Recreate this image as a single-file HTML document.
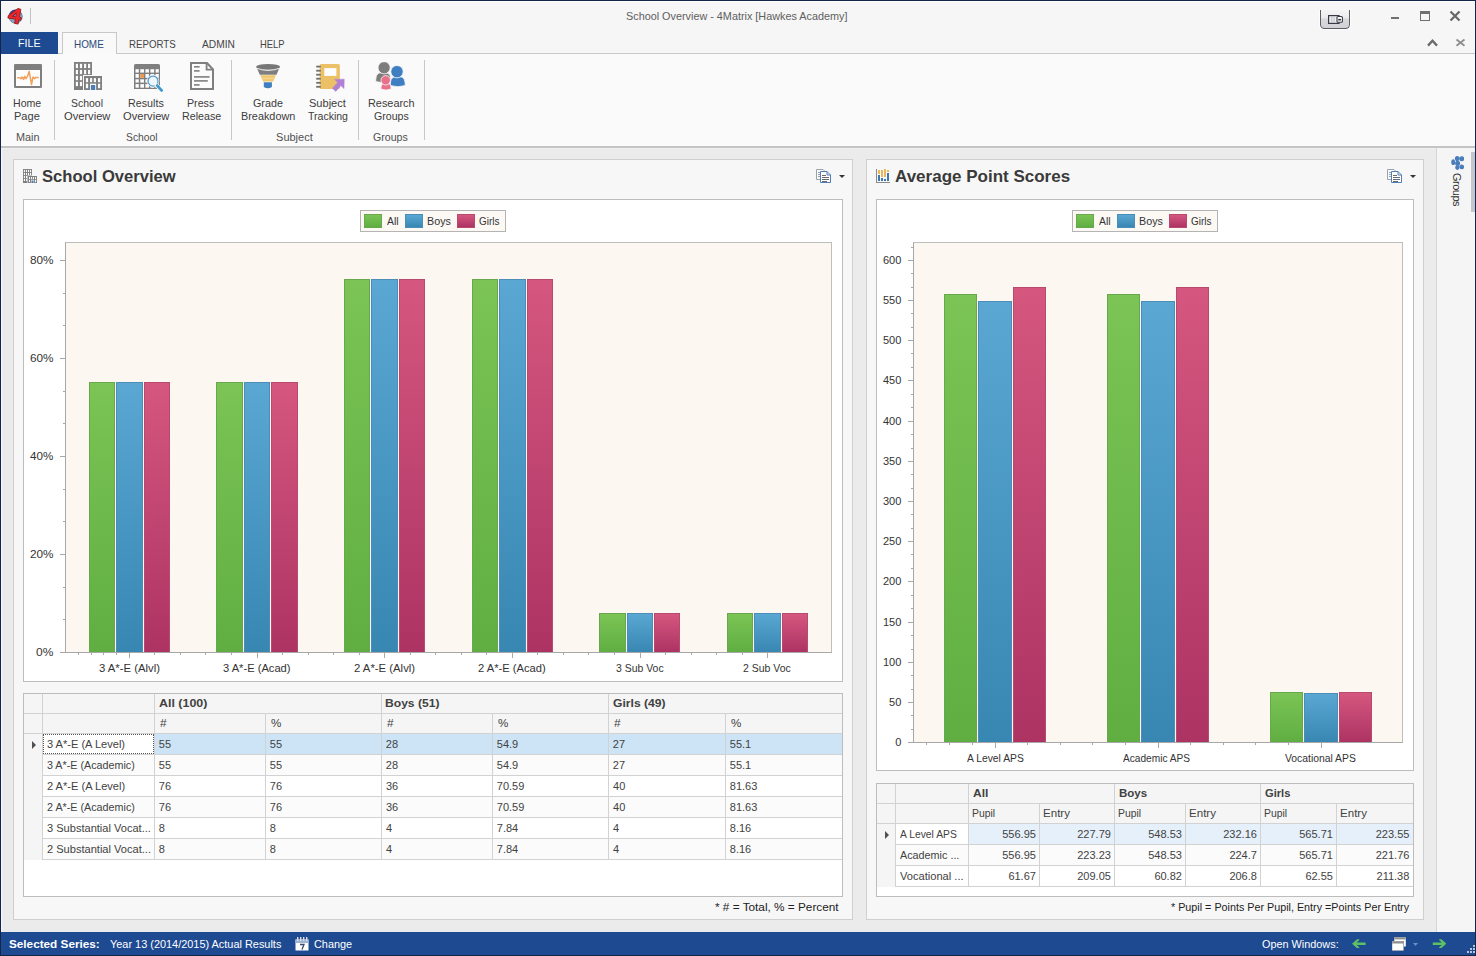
<!DOCTYPE html>
<html><head><meta charset="utf-8"><title>School Overview - 4Matrix [Hawkes Academy]</title>
<style>
html,body{margin:0;padding:0;}
body{width:1476px;height:956px;overflow:hidden;position:relative;background:#ebebeb;font-family:"Liberation Sans",sans-serif;font-size:11px;}
div,svg.a{position:absolute;display:block;}
span.t{position:absolute;white-space:pre;display:block;transform-origin:0 0;}
</style></head><body>
<div style="left:0px;top:0px;width:1476px;height:956px;background:#13264a;"></div>
<div style="left:1px;top:1px;width:1474px;height:146px;background:#f6f6f6;"></div>
<div style="left:1px;top:1px;width:1474px;height:1px;background:#ffffff;"></div>
<div style="left:1px;top:53px;width:1474px;height:1px;background:#c8c8c8;"></div>
<div style="left:1px;top:146px;width:1474px;height:2px;background:#c4c4c4;"></div>
<div style="left:1px;top:148px;width:1435px;height:784px;background:#ebebeb;"></div>
<div style="left:1436px;top:148px;width:1px;height:784px;background:#d6d6d6;"></div>
<div style="left:1437px;top:148px;width:38px;height:784px;background:#f5f5f5;"></div>
<div style="left:1px;top:148px;width:1435px;height:1px;background:#f0f0f0;"></div>
<div style="left:1px;top:148px;width:1px;height:784px;background:#f6f8fb;"></div>
<div style="left:1px;top:932px;width:1474px;height:23px;background:#1e4a91;"></div>
<svg class="a" style="left:6px;top:7px" width="18" height="18" viewBox="0 0 18 18">
<circle cx="9.6" cy="9.6" r="6.7" fill="#86a4c2" stroke="#4a5f80" stroke-width=".6"/><path d="M3 7.4 A6.9 6.9 0 0 1 13 3.6 L6 11z" fill="#33468c"/>
<g transform="translate(0.2,-0.6) scale(1.05,1.12)"><path d="M11.2 1.8 L14 2.6 L12.6 9.6 L14.6 10.2 L13.8 12.4 L12 12 L11.3 15.8 L8 15.2 L8.8 11.4 L1.6 10.4 L2 8.2 Z M9.6 5.8 L6 8.8 L9.2 9.3 Z" fill="#ee262c" stroke="#8a1216" stroke-width=".7" fill-rule="evenodd"/></g></svg>
<div style="left:30px;top:8px;width:1px;height:16px;background:#c2c2c2;"></div>
<span class="t" style="left:626.11px;top:10px;font-size:11px;line-height:12px;color:#606060;transform:scaleX(0.9842);">School Overview - 4Matrix [Hawkes Academy]</span>
<div class="a" style="left:1319px;top:10px;width:32px;height:20px;border-radius:0 0 5.5px 5.5px;background:#fdfdfd"></div>
<div class="a" style="left:1320px;top:10px;width:30px;height:19px;border:1px solid #5e5e62;border-top:none;border-radius:0 0 4.5px 4.5px;background:linear-gradient(#f5f5f5 0%,#ececec 42%,#d9d9dc 50%,#d2d2d6 100%);box-sizing:border-box"></div>
<svg class="a" style="left:1328px;top:15px" width="15" height="9" viewBox="0 0 15 9">
<rect x=".6" y=".6" width="10.4" height="7.8" fill="#ececee" stroke="#3a3a46" stroke-width="1.2"/><rect x="3.4" y="1.2" width=".8" height="6.6" fill="#b4b4bc"/><rect x="5.6" y="1.2" width=".8" height="6.6" fill="#b4b4bc"/>
<rect x="9" y="1.5" width="5.4" height="5.8" rx="1" fill="#fff" stroke="#3a3a46" stroke-width="1.1"/><rect x="10.2" y="3.9" width="2.8" height="1.6" fill="#3a3a46"/></svg>
<div style="left:1391px;top:17px;width:8px;height:2px;background:#707070;"></div>
<div class="a" style="left:1420px;top:11px;width:10px;height:10px;border:1px solid #707070;border-top-width:3px;box-sizing:border-box"></div>
<svg class="a" style="left:1449px;top:10px" width="12" height="12" viewBox="0 0 12 12"><path d="M1.5 1.5 L10.5 10.5 M10.5 1.5 L1.5 10.5" stroke="#686868" stroke-width="2.3" fill="none"/></svg>
<svg class="a" style="left:1427px;top:38px" width="11" height="9" viewBox="0 0 11 9"><path d="M1 7.6 L5.5 2.8 L10 7.6" stroke="#6a6a6a" stroke-width="2.3" fill="none"/></svg>
<svg class="a" style="left:1455px;top:38px" width="11" height="9" viewBox="0 0 11 9"><path d="M1.5 1.5 L9.5 7.8 M9.5 1.5 L1.5 7.8" stroke="#8e8e8e" stroke-width="1.8" fill="none"/></svg>
<div style="left:1px;top:32px;width:57px;height:22px;background:#1e4a91;"></div>
<span class="t" style="left:17.85px;top:37px;font-size:11px;line-height:12px;color:#ffffff;transform:scaleX(0.9690);">FILE</span>
<div class="a" style="left:62px;top:32px;width:55px;height:22px;border:1px solid #c8c8c8;border-bottom:none;background:#f9f9f9;box-sizing:border-box"></div>
<span class="t" style="left:74.01px;top:38px;font-size:11px;line-height:12px;color:#2b4a78;transform:scaleX(0.9012);">HOME</span>
<span class="t" style="left:128.83px;top:38px;font-size:11px;line-height:12px;color:#444;transform:scaleX(0.8812);">REPORTS</span>
<span class="t" style="left:202.00px;top:38px;font-size:11px;line-height:12px;color:#444;transform:scaleX(0.9269);">ADMIN</span>
<span class="t" style="left:260.06px;top:38px;font-size:11px;line-height:12px;color:#444;transform:scaleX(0.8509);">HELP</span>
<div style="left:1px;top:54px;width:1474px;height:92px;background:#fafafa;"></div>
<div style="left:63px;top:53px;width:53px;height:1px;background:#fafafa;"></div>
<span class="t" style="left:12.51px;top:97px;font-size:11px;line-height:12px;color:#3c3c3c;transform:scaleX(0.9606);">Home</span>
<span class="t" style="left:13.67px;top:110px;font-size:11px;line-height:12px;color:#3c3c3c;transform:scaleX(1.0046);">Page</span>
<span class="t" style="left:71.07px;top:97px;font-size:11px;line-height:12px;color:#3c3c3c;transform:scaleX(0.9505);">School</span>
<span class="t" style="left:63.54px;top:110px;font-size:11px;line-height:12px;color:#3c3c3c;transform:scaleX(1.0115);">Overview</span>
<span class="t" style="left:127.90px;top:97px;font-size:11px;line-height:12px;color:#3c3c3c;transform:scaleX(0.9750);">Results</span>
<span class="t" style="left:122.54px;top:110px;font-size:11px;line-height:12px;color:#3c3c3c;transform:scaleX(1.0115);">Overview</span>
<span class="t" style="left:187.45px;top:97px;font-size:11px;line-height:12px;color:#3c3c3c;transform:scaleX(0.9672);">Press</span>
<span class="t" style="left:181.50px;top:110px;font-size:11px;line-height:12px;color:#3c3c3c;transform:scaleX(0.9717);">Release</span>
<span class="t" style="left:253.01px;top:97px;font-size:11px;line-height:12px;color:#3c3c3c;transform:scaleX(0.9787);">Grade</span>
<span class="t" style="left:240.79px;top:110px;font-size:11px;line-height:12px;color:#3c3c3c;transform:scaleX(0.9871);">Breakdown</span>
<span class="t" style="left:309.05px;top:97px;font-size:11px;line-height:12px;color:#3c3c3c;transform:scaleX(1.0045);">Subject</span>
<span class="t" style="left:307.96px;top:110px;font-size:11px;line-height:12px;color:#3c3c3c;transform:scaleX(0.9568);">Tracking</span>
<span class="t" style="left:367.63px;top:97px;font-size:11px;line-height:12px;color:#3c3c3c;transform:scaleX(0.9890);">Research</span>
<span class="t" style="left:373.52px;top:110px;font-size:11px;line-height:12px;color:#3c3c3c;transform:scaleX(0.9644);">Groups</span>
<span class="t" style="left:15.69px;top:131px;font-size:11px;line-height:12px;color:#505050;transform:scaleX(0.9842);">Main</span>
<span class="t" style="left:126.33px;top:131px;font-size:11px;line-height:12px;color:#505050;transform:scaleX(0.9413);">School</span>
<span class="t" style="left:276.05px;top:131px;font-size:11px;line-height:12px;color:#505050;">Subject</span>
<span class="t" style="left:372.82px;top:131px;font-size:11px;line-height:12px;color:#505050;transform:scaleX(0.9644);">Groups</span>
<div style="left:54px;top:60px;width:1px;height:80px;background:#c8c8c8;"></div>
<div style="left:231px;top:60px;width:1px;height:80px;background:#c8c8c8;"></div>
<div style="left:358px;top:60px;width:1px;height:80px;background:#c8c8c8;"></div>
<div style="left:424px;top:60px;width:1px;height:80px;background:#c8c8c8;"></div>
<svg class="a" style="left:14px;top:64px" width="28" height="24" viewBox="0 0 28 24">
<rect x="0" y="0" width="28" height="24" rx="1.2" fill="#7f7f7f"/><rect x="2" y="6" width="24" height="16" fill="#fdfdfd"/>
<path d="M3.3 13.8 L6 13.8 L7 14.8 L8.2 13 L9.6 15.4 L10.8 12.4 L12 14.6 L13.4 12.6 L15.2 7.4 L17.5 20.5 L19 13 L20.4 14.6 L21.4 13.6 L24.6 13.6" fill="none" stroke="#f0a15c" stroke-width="1.5" stroke-linejoin="round"/></svg>
<svg class="a" style="left:74px;top:62px" width="28" height="28" viewBox="0 0 28 28"><rect x="0" y="0" width="18" height="28" fill="#7f7f7f"/><rect x="1.8" y="1.8" width="2.2" height="4.3" fill="#fbfbfb"/><rect x="5.9" y="1.8" width="2.2" height="4.3" fill="#fbfbfb"/><rect x="10" y="1.8" width="2.2" height="4.3" fill="#fbfbfb"/><rect x="14" y="1.8" width="2.2" height="4.3" fill="#fbfbfb"/><rect x="1.8" y="7.9" width="2.2" height="4.3" fill="#fbfbfb"/><rect x="5.9" y="7.9" width="2.2" height="4.3" fill="#fbfbfb"/><rect x="10" y="7.9" width="2.2" height="4.3" fill="#fbfbfb"/><rect x="14" y="7.9" width="2.2" height="4.3" fill="#fbfbfb"/><rect x="1.8" y="13.9" width="2.2" height="4.3" fill="#fbfbfb"/><rect x="5.9" y="13.9" width="2.2" height="4.3" fill="#fbfbfb"/><rect x="1.8" y="19.8" width="2.2" height="4.3" fill="#fbfbfb"/><rect x="5.9" y="19.8" width="2.2" height="4.3" fill="#fbfbfb"/><rect x="9" y="13" width="19" height="15" fill="#fbfbfb"/><rect x="10" y="14" width="18" height="14" fill="#7f7f7f"/><rect x="11.9" y="16.1" width="2.2" height="4.1" fill="#fbfbfb"/><rect x="16" y="16.1" width="2.2" height="4.1" fill="#fbfbfb"/><rect x="19.8" y="16.1" width="2.2" height="4.1" fill="#fbfbfb"/><rect x="24" y="16.1" width="2.2" height="4.1" fill="#fbfbfb"/><rect x="11.9" y="21.7" width="2.2" height="4.5" fill="#fbfbfb"/><rect x="24" y="21.7" width="2.2" height="4.5" fill="#fbfbfb"/><rect x="16" y="21.7" width="6.1" height="6.3" fill="#fbfbfb"/><rect x="16.9" y="23" width="4.3" height="5" fill="#4a7ebb"/></svg>
<svg class="a" style="left:134px;top:64px" width="30" height="29" viewBox="0 0 30 29"><path d="M0 25 L0 1.5 Q0 0 1.5 0 L24.5 0 Q26 0 26 1.5 L26 25 Z" fill="#7f7f7f"/><rect x="1.5" y="5.2" width="3.3" height="3.4" fill="#fdfdfd"/><rect x="1.5" y="10" width="3.3" height="3.8" fill="#fdfdfd"/><rect x="1.5" y="15.3" width="3.3" height="3.3" fill="#fdfdfd"/><rect x="1.5" y="20.1" width="3.3" height="3.6" fill="#fdfdfd"/><rect x="6.3" y="5.2" width="3.7" height="3.4" fill="#fdfdfd"/><rect x="6.3" y="10" width="3.7" height="3.8" fill="#fdfdfd"/><rect x="6.3" y="15.3" width="3.7" height="3.3" fill="#fdfdfd"/><rect x="6.3" y="20.1" width="3.7" height="3.6" fill="#fdfdfd"/><rect x="11.4" y="5.2" width="3.5" height="3.4" fill="#fdfdfd"/><rect x="11.4" y="10" width="3.5" height="3.8" fill="#fdfdfd"/><rect x="11.4" y="15.3" width="3.5" height="3.3" fill="#fdfdfd"/><rect x="11.4" y="20.1" width="3.5" height="3.6" fill="#fdfdfd"/><rect x="16.4" y="5.2" width="3.7" height="3.4" fill="#fdfdfd"/><rect x="16.4" y="10" width="3.7" height="3.8" fill="#fdfdfd"/><rect x="16.4" y="15.3" width="3.7" height="3.3" fill="#fdfdfd"/><rect x="16.4" y="20.1" width="3.7" height="3.6" fill="#fdfdfd"/><rect x="21.6" y="5.2" width="3.2" height="3.4" fill="#fdfdfd"/><rect x="21.6" y="10" width="3.2" height="3.8" fill="#fdfdfd"/><rect x="21.6" y="15.3" width="3.2" height="3.3" fill="#fdfdfd"/><rect x="21.6" y="20.1" width="3.2" height="3.6" fill="#fdfdfd"/><rect x="6.3" y="10" width="3.7" height="3.8" fill="#f0964a"/><circle cx="19" cy="17.1" r="6.3" fill="#fbfbfb"/><circle cx="19" cy="17.1" r="5" fill="#eef6fc" stroke="#4f9ad0" stroke-width="1.25"/><path d="M22.8 21.4 L27.6 26.4" stroke="#fbfbfb" stroke-width="4.2" stroke-linecap="round"/><path d="M23.2 21.6 L27.6 26.4" stroke="#3d96cc" stroke-width="2.8" stroke-linecap="round"/></svg>
<svg class="a" style="left:190px;top:62px" width="24" height="28" viewBox="0 0 24 28">
<path d="M1 1 L17 1 L23 7.5 L23 27 L1 27 Z" fill="#fbfbfb" stroke="#7f7f7f" stroke-width="2"/><path d="M16.6 1 L16.6 7.6 L23 7.6" fill="none" stroke="#7f7f7f" stroke-width="1.8"/>
<rect x="4" y="4" width="5.6" height="1.6" fill="#7f7f7f"/><rect x="4" y="8.1" width="5.6" height="1.6" fill="#7f7f7f"/><rect x="4" y="14.1" width="15.6" height="1.6" fill="#7f7f7f"/><rect x="4" y="18.1" width="13.8" height="1.6" fill="#7f7f7f"/><rect x="4" y="22.1" width="5.6" height="1.6" fill="#7f7f7f"/></svg>
<svg class="a" style="left:256px;top:64px" width="25" height="25" viewBox="0 0 25 25">
<path d="M0.6 3.4 Q12.1 9 23.6 3.4 L20.5 10.7 L3.8 10.7 Z" fill="#7f7f7f"/>
<ellipse cx="12.1" cy="2.9" rx="12.1" ry="2.9" fill="#777777"/>
<path d="M0.4 4.2 Q12.1 8.6 23.8 4.2" fill="none" stroke="#f4f4f4" stroke-width=".9"/>
<path d="M4.3 11.3 L19.9 11.3 L17 17.6 L7.2 17.6 Z" fill="#f0c468"/><path d="M5.4 13.6 L18.8 13.6 L18 15.3 L6.2 15.3Z" fill="#f6d48c"/>
<path d="M7.8 18.2 L15.9 18.2 L15.9 23 Q11.8 25.6 7.8 23 Z" fill="#3f7fc1"/></svg>
<svg class="a" style="left:315px;top:64px" width="30" height="29" viewBox="0 0 30 29"><rect x="4.7" y="0" width="20.2" height="25.1" rx="1.5" fill="#ecc067"/><rect x="9.3" y="4.1" width="12.1" height="7.8" fill="#fdfdfd"/><rect x="1.2" y="1.7" width="4.6" height="1.8" fill="#6f6f6f"/><rect x="1.2" y="5.8" width="4.6" height="1.8" fill="#6f6f6f"/><rect x="1.2" y="9.8" width="4.6" height="1.8" fill="#6f6f6f"/><rect x="1.2" y="13.8" width="4.6" height="1.8" fill="#6f6f6f"/><rect x="1.2" y="17.9" width="4.6" height="1.8" fill="#6f6f6f"/><rect x="1.2" y="21.9" width="4.6" height="1.8" fill="#6f6f6f"/><path d="M19.6 15.4 L29.2 15.2 L29 24.6 L25.8 21.6 L20.8 27.4 L17.4 24.2 L22.8 18.6 Z" fill="#b07fd6" stroke="#b07fd6" stroke-width=".5"/></svg>
<svg class="a" style="left:375px;top:62px" width="31" height="30" viewBox="0 0 31 30"><path d="M0.7 19.6 C0.7 12.1 2.9 10.6 8.3 10.6 C13.7 10.6 15.9 12.1 15.9 19.6 Q8.3 21.8 0.7 19.6Z" fill="#7d7d7d" stroke="#fafafa" stroke-width=".8"/><circle cx="9.1" cy="5.75" r="6.1" fill="#7d7d7d" stroke="#fafafa" stroke-width=".8"/><path d="M15.3 23.6 C15.3 16.1 17.5 14.6 22.8 14.6 C28.0 14.6 30.2 16.1 30.2 23.6 Q22.8 25.8 15.3 23.6Z" fill="#3f7fc1" stroke="#fafafa" stroke-width=".8"/><circle cx="22" cy="9.7" r="6.2" fill="#3f7fc1" stroke="#fafafa" stroke-width=".8"/><path d="M5.9 27 C5.9 22.1 8.1 20.6 11.0 20.6 C13.9 20.6 16.1 22.1 16.1 27 Q11.0 29.2 5.9 27Z" fill="#e8708a" stroke="#fafafa" stroke-width=".8"/><circle cx="10.7" cy="18.3" r="4.7" fill="#e8708a" stroke="#fafafa" stroke-width=".8"/></svg>
<div class="a" style="left:13px;top:159px;width:840px;height:761px;background:#f7f7f7;border:1px solid #cfcfcf;box-sizing:border-box"></div>
<div class="a" style="left:866px;top:159px;width:558px;height:761px;background:#f7f7f7;border:1px solid #cfcfcf;box-sizing:border-box"></div>
<svg class="a" style="left:23px;top:169px" width="14" height="14" viewBox="0 0 28 28"><rect x="0" y="0" width="18" height="28" fill="#7f7f7f"/><rect x="1.8" y="1.8" width="2.2" height="4.3" fill="#fbfbfb"/><rect x="5.9" y="1.8" width="2.2" height="4.3" fill="#fbfbfb"/><rect x="10" y="1.8" width="2.2" height="4.3" fill="#fbfbfb"/><rect x="14" y="1.8" width="2.2" height="4.3" fill="#fbfbfb"/><rect x="1.8" y="7.9" width="2.2" height="4.3" fill="#fbfbfb"/><rect x="5.9" y="7.9" width="2.2" height="4.3" fill="#fbfbfb"/><rect x="10" y="7.9" width="2.2" height="4.3" fill="#fbfbfb"/><rect x="14" y="7.9" width="2.2" height="4.3" fill="#fbfbfb"/><rect x="1.8" y="13.9" width="2.2" height="4.3" fill="#fbfbfb"/><rect x="5.9" y="13.9" width="2.2" height="4.3" fill="#fbfbfb"/><rect x="1.8" y="19.8" width="2.2" height="4.3" fill="#fbfbfb"/><rect x="5.9" y="19.8" width="2.2" height="4.3" fill="#fbfbfb"/><rect x="9" y="13" width="19" height="15" fill="#fbfbfb"/><rect x="10" y="14" width="18" height="14" fill="#7f7f7f"/><rect x="11.9" y="16.1" width="2.2" height="4.1" fill="#fbfbfb"/><rect x="16" y="16.1" width="2.2" height="4.1" fill="#fbfbfb"/><rect x="19.8" y="16.1" width="2.2" height="4.1" fill="#fbfbfb"/><rect x="24" y="16.1" width="2.2" height="4.1" fill="#fbfbfb"/><rect x="11.9" y="21.7" width="2.2" height="4.5" fill="#fbfbfb"/><rect x="24" y="21.7" width="2.2" height="4.5" fill="#fbfbfb"/><rect x="16" y="21.7" width="6.1" height="6.3" fill="#fbfbfb"/><rect x="16.9" y="23" width="4.3" height="5" fill="#4a7ebb"/></svg>
<span class="t" style="left:41.61px;top:167px;font-size:17px;line-height:19px;color:#3a3a3a;font-weight:bold;transform:scaleX(0.9758);">School Overview</span>
<svg class="a" style="left:876px;top:169px" width="14" height="14" viewBox="0 0 14 14">
<rect x="0" y="0" width="1" height="14" fill="#8a8a8a"/><rect x="0" y="13" width="14" height="1" fill="#8a8a8a"/>
<rect x="2" y="1" width="2" height="4" fill="#e8b85a"/><rect x="2" y="6" width="2" height="6" fill="#3f77b0"/>
<rect x="5" y="1" width="2" height="7" fill="#e8b85a"/><rect x="5" y="9" width="2" height="3" fill="#3f77b0"/>
<rect x="8" y="0" width="2" height="8" fill="#e8b85a"/><rect x="8" y="10" width="2" height="2" fill="#3f77b0"/>
<rect x="11" y="1" width="2" height="2" fill="#e8b85a"/><rect x="11" y="4" width="2" height="8" fill="#3f77b0"/></svg>
<span class="t" style="left:895.02px;top:167px;font-size:17px;line-height:19px;color:#3a3a3a;font-weight:bold;">Average Point Scores</span>
<svg class="a" style="left:816px;top:169px" width="15" height="14" viewBox="0 0 15 14">
<path d="M.5 .5 L7 .5 L9.5 3 L9.5 10.5 L.5 10.5Z" fill="#fafafa" stroke="#9aa3ad"/>
<rect x="2" y="3" width="2" height="1" fill="#9aa3ad"/><rect x="2" y="5" width="2" height="1" fill="#9aa3ad"/><rect x="2" y="7" width="2" height="1" fill="#9aa3ad"/>
<path d="M4.5 2.5 L11 2.5 L14.5 6 L14.5 13.5 L4.5 13.5Z" fill="#ffffff" stroke="#4f7fb5"/><path d="M11 2.5 L11 6 L14.5 6" fill="none" stroke="#4f7fb5"/>
<rect x="6" y="6" width="4" height="1" fill="#6a6a6a"/><rect x="6" y="8" width="7" height="1" fill="#6a6a6a"/><rect x="6" y="10" width="7" height="1" fill="#6a6a6a"/><rect x="6" y="12" width="5" height="1" fill="#6a6a6a"/></svg>
<svg class="a" style="left:839px;top:175px" width="6" height="3" viewBox="0 0 6 3"><path d="M0 0 L6 0 L3 3Z" fill="#333"/></svg>
<svg class="a" style="left:1387px;top:169px" width="15" height="14" viewBox="0 0 15 14">
<path d="M.5 .5 L7 .5 L9.5 3 L9.5 10.5 L.5 10.5Z" fill="#fafafa" stroke="#9aa3ad"/>
<rect x="2" y="3" width="2" height="1" fill="#9aa3ad"/><rect x="2" y="5" width="2" height="1" fill="#9aa3ad"/><rect x="2" y="7" width="2" height="1" fill="#9aa3ad"/>
<path d="M4.5 2.5 L11 2.5 L14.5 6 L14.5 13.5 L4.5 13.5Z" fill="#ffffff" stroke="#4f7fb5"/><path d="M11 2.5 L11 6 L14.5 6" fill="none" stroke="#4f7fb5"/>
<rect x="6" y="6" width="4" height="1" fill="#6a6a6a"/><rect x="6" y="8" width="7" height="1" fill="#6a6a6a"/><rect x="6" y="10" width="7" height="1" fill="#6a6a6a"/><rect x="6" y="12" width="5" height="1" fill="#6a6a6a"/></svg>
<svg class="a" style="left:1410px;top:175px" width="6" height="3" viewBox="0 0 6 3"><path d="M0 0 L6 0 L3 3Z" fill="#333"/></svg>
<div class="a" style="left:23px;top:199px;width:820px;height:483px;background:#fff;border:1px solid #bdbdbd;box-sizing:border-box"></div>
<div class="a" style="left:65px;top:242px;width:767px;height:411px;background:#fcf7f1;border:1px solid #bebebe;border-left-color:#a8a8a8;border-bottom-color:#a8a8a8;box-sizing:border-box"></div>
<div class="a" style="left:360px;top:210px;width:146px;height:22px;border:1px solid #b4b4b4;background:#fcf9f5;box-sizing:border-box"></div>
<div class="a" style="left:364px;top:214px;width:18px;height:14px;background:linear-gradient(#7bc455,#60ae42);border:1px solid #68a84c;box-sizing:border-box"></div>
<span class="t" style="left:386.70px;top:215px;font-size:11px;line-height:12px;color:#333;transform:scaleX(0.9470);">All</span>
<div class="a" style="left:405px;top:214px;width:18px;height:14px;background:linear-gradient(#5aa7d4,#3886b2);border:1px solid #4a8db6;box-sizing:border-box"></div>
<span class="t" style="left:426.85px;top:215px;font-size:11px;line-height:12px;color:#333;transform:scaleX(0.9758);">Boys</span>
<div class="a" style="left:457px;top:214px;width:18px;height:14px;background:linear-gradient(#d5577f,#ad3363);border:1px solid #b84a70;box-sizing:border-box"></div>
<span class="t" style="left:479.15px;top:215px;font-size:11px;line-height:12px;color:#333;transform:scaleX(0.9011);">Girls</span>
<div style="left:60px;top:260px;width:5px;height:1px;background:#a8a8a8;"></div>
<span class="t" style="left:29.87px;top:254px;font-size:11px;line-height:12px;color:#333;transform:scaleX(1.0690);">80%</span>
<div style="left:60px;top:358px;width:5px;height:1px;background:#a8a8a8;"></div>
<span class="t" style="left:29.87px;top:352px;font-size:11px;line-height:12px;color:#333;transform:scaleX(1.0690);">60%</span>
<div style="left:60px;top:456px;width:5px;height:1px;background:#a8a8a8;"></div>
<span class="t" style="left:30.14px;top:450px;font-size:11px;line-height:12px;color:#333;transform:scaleX(1.0565);">40%</span>
<div style="left:60px;top:554px;width:5px;height:1px;background:#a8a8a8;"></div>
<span class="t" style="left:29.87px;top:548px;font-size:11px;line-height:12px;color:#333;transform:scaleX(1.0690);">20%</span>
<div style="left:60px;top:652px;width:5px;height:1px;background:#a8a8a8;"></div>
<span class="t" style="left:36.09px;top:646px;font-size:11px;line-height:12px;color:#333;transform:scaleX(1.0903);">0%</span>
<div style="left:63px;top:293px;width:2px;height:1px;background:#a8a8a8;"></div>
<div style="left:63px;top:325px;width:2px;height:1px;background:#a8a8a8;"></div>
<div style="left:63px;top:391px;width:2px;height:1px;background:#a8a8a8;"></div>
<div style="left:63px;top:423px;width:2px;height:1px;background:#a8a8a8;"></div>
<div style="left:63px;top:489px;width:2px;height:1px;background:#a8a8a8;"></div>
<div style="left:63px;top:521px;width:2px;height:1px;background:#a8a8a8;"></div>
<div style="left:63px;top:587px;width:2px;height:1px;background:#a8a8a8;"></div>
<div style="left:63px;top:619px;width:2px;height:1px;background:#a8a8a8;"></div>
<div style="left:129px;top:653px;width:1px;height:5px;background:#a8a8a8;"></div>
<div style="left:116px;top:653px;width:1px;height:2px;background:#a8a8a8;"></div>
<div style="left:103px;top:653px;width:1px;height:2px;background:#a8a8a8;"></div>
<div style="left:91px;top:653px;width:1px;height:2px;background:#a8a8a8;"></div>
<div style="left:78px;top:653px;width:1px;height:2px;background:#a8a8a8;"></div>
<div style="left:154px;top:653px;width:1px;height:2px;background:#a8a8a8;"></div>
<div style="left:180px;top:653px;width:1px;height:2px;background:#a8a8a8;"></div>
<div style="left:205px;top:653px;width:1px;height:2px;background:#a8a8a8;"></div>
<div style="left:231px;top:653px;width:1px;height:2px;background:#a8a8a8;"></div>
<span class="t" style="left:98.50px;top:662px;font-size:11px;line-height:12px;color:#333;transform:scaleX(1.0283);">3 A*-E (Alvl)</span>
<div style="left:257px;top:653px;width:1px;height:5px;background:#a8a8a8;"></div>
<div style="left:282px;top:653px;width:1px;height:2px;background:#a8a8a8;"></div>
<div style="left:308px;top:653px;width:1px;height:2px;background:#a8a8a8;"></div>
<div style="left:333px;top:653px;width:1px;height:2px;background:#a8a8a8;"></div>
<div style="left:359px;top:653px;width:1px;height:2px;background:#a8a8a8;"></div>
<span class="t" style="left:222.87px;top:662px;font-size:11px;line-height:12px;color:#333;transform:scaleX(1.0134);">3 A*-E (Acad)</span>
<div style="left:384px;top:653px;width:1px;height:5px;background:#a8a8a8;"></div>
<div style="left:410px;top:653px;width:1px;height:2px;background:#a8a8a8;"></div>
<div style="left:435px;top:653px;width:1px;height:2px;background:#a8a8a8;"></div>
<div style="left:461px;top:653px;width:1px;height:2px;background:#a8a8a8;"></div>
<div style="left:486px;top:653px;width:1px;height:2px;background:#a8a8a8;"></div>
<span class="t" style="left:353.70px;top:662px;font-size:11px;line-height:12px;color:#333;transform:scaleX(1.0305);">2 A*-E (Alvl)</span>
<div style="left:512px;top:653px;width:1px;height:5px;background:#a8a8a8;"></div>
<div style="left:537px;top:653px;width:1px;height:2px;background:#a8a8a8;"></div>
<div style="left:563px;top:653px;width:1px;height:2px;background:#a8a8a8;"></div>
<div style="left:588px;top:653px;width:1px;height:2px;background:#a8a8a8;"></div>
<div style="left:614px;top:653px;width:1px;height:2px;background:#a8a8a8;"></div>
<span class="t" style="left:478.08px;top:662px;font-size:11px;line-height:12px;color:#333;transform:scaleX(1.0153);">2 A*-E (Acad)</span>
<div style="left:640px;top:653px;width:1px;height:5px;background:#a8a8a8;"></div>
<div style="left:665px;top:653px;width:1px;height:2px;background:#a8a8a8;"></div>
<div style="left:691px;top:653px;width:1px;height:2px;background:#a8a8a8;"></div>
<div style="left:716px;top:653px;width:1px;height:2px;background:#a8a8a8;"></div>
<div style="left:742px;top:653px;width:1px;height:2px;background:#a8a8a8;"></div>
<span class="t" style="left:615.64px;top:662px;font-size:11px;line-height:12px;color:#333;transform:scaleX(0.9494);">3 Sub Voc</span>
<div style="left:767px;top:653px;width:1px;height:5px;background:#a8a8a8;"></div>
<span class="t" style="left:743.19px;top:662px;font-size:11px;line-height:12px;color:#333;transform:scaleX(0.9518);">2 Sub Voc</span>
<div class="a" style="left:89px;top:382px;width:26px;height:270px;background:linear-gradient(#7bc455,#60ae42);border:1px solid #68a84c;border-bottom:none;box-sizing:border-box"></div>
<div class="a" style="left:116px;top:382px;width:27px;height:270px;background:linear-gradient(#5aa7d4,#3886b2);border:1px solid #4a8db6;border-bottom:none;box-sizing:border-box"></div>
<div class="a" style="left:144px;top:382px;width:26px;height:270px;background:linear-gradient(#d5577f,#ad3363);border:1px solid #b84a70;border-bottom:none;box-sizing:border-box"></div>
<div class="a" style="left:216px;top:382px;width:27px;height:270px;background:linear-gradient(#7bc455,#60ae42);border:1px solid #68a84c;border-bottom:none;box-sizing:border-box"></div>
<div class="a" style="left:244px;top:382px;width:26px;height:270px;background:linear-gradient(#5aa7d4,#3886b2);border:1px solid #4a8db6;border-bottom:none;box-sizing:border-box"></div>
<div class="a" style="left:271px;top:382px;width:27px;height:270px;background:linear-gradient(#d5577f,#ad3363);border:1px solid #b84a70;border-bottom:none;box-sizing:border-box"></div>
<div class="a" style="left:344px;top:279px;width:26px;height:373px;background:linear-gradient(#7bc455,#60ae42);border:1px solid #68a84c;border-bottom:none;box-sizing:border-box"></div>
<div class="a" style="left:371px;top:279px;width:27px;height:373px;background:linear-gradient(#5aa7d4,#3886b2);border:1px solid #4a8db6;border-bottom:none;box-sizing:border-box"></div>
<div class="a" style="left:399px;top:279px;width:26px;height:373px;background:linear-gradient(#d5577f,#ad3363);border:1px solid #b84a70;border-bottom:none;box-sizing:border-box"></div>
<div class="a" style="left:472px;top:279px;width:26px;height:373px;background:linear-gradient(#7bc455,#60ae42);border:1px solid #68a84c;border-bottom:none;box-sizing:border-box"></div>
<div class="a" style="left:499px;top:279px;width:27px;height:373px;background:linear-gradient(#5aa7d4,#3886b2);border:1px solid #4a8db6;border-bottom:none;box-sizing:border-box"></div>
<div class="a" style="left:527px;top:279px;width:26px;height:373px;background:linear-gradient(#d5577f,#ad3363);border:1px solid #b84a70;border-bottom:none;box-sizing:border-box"></div>
<div class="a" style="left:599px;top:613px;width:27px;height:39px;background:linear-gradient(#7bc455,#60ae42);border:1px solid #68a84c;border-bottom:none;box-sizing:border-box"></div>
<div class="a" style="left:627px;top:613px;width:26px;height:39px;background:linear-gradient(#5aa7d4,#3886b2);border:1px solid #4a8db6;border-bottom:none;box-sizing:border-box"></div>
<div class="a" style="left:654px;top:613px;width:26px;height:39px;background:linear-gradient(#d5577f,#ad3363);border:1px solid #b84a70;border-bottom:none;box-sizing:border-box"></div>
<div class="a" style="left:727px;top:613px;width:26px;height:39px;background:linear-gradient(#7bc455,#60ae42);border:1px solid #68a84c;border-bottom:none;box-sizing:border-box"></div>
<div class="a" style="left:754px;top:613px;width:27px;height:39px;background:linear-gradient(#5aa7d4,#3886b2);border:1px solid #4a8db6;border-bottom:none;box-sizing:border-box"></div>
<div class="a" style="left:782px;top:613px;width:26px;height:39px;background:linear-gradient(#d5577f,#ad3363);border:1px solid #b84a70;border-bottom:none;box-sizing:border-box"></div>
<div class="a" style="left:876px;top:199px;width:538px;height:572px;background:#fff;border:1px solid #bdbdbd;box-sizing:border-box"></div>
<div class="a" style="left:913px;top:242px;width:490px;height:501px;background:#fcf7f1;border:1px solid #bebebe;border-left-color:#a8a8a8;border-bottom-color:#a8a8a8;box-sizing:border-box"></div>
<div class="a" style="left:1072px;top:210px;width:146px;height:22px;border:1px solid #b4b4b4;background:#fcf9f5;box-sizing:border-box"></div>
<div class="a" style="left:1076px;top:214px;width:18px;height:14px;background:linear-gradient(#7bc455,#60ae42);border:1px solid #68a84c;box-sizing:border-box"></div>
<span class="t" style="left:1098.70px;top:215px;font-size:11px;line-height:12px;color:#333;transform:scaleX(0.9470);">All</span>
<div class="a" style="left:1117px;top:214px;width:18px;height:14px;background:linear-gradient(#5aa7d4,#3886b2);border:1px solid #4a8db6;box-sizing:border-box"></div>
<span class="t" style="left:1138.85px;top:215px;font-size:11px;line-height:12px;color:#333;transform:scaleX(0.9758);">Boys</span>
<div class="a" style="left:1169px;top:214px;width:18px;height:14px;background:linear-gradient(#d5577f,#ad3363);border:1px solid #b84a70;box-sizing:border-box"></div>
<span class="t" style="left:1191.15px;top:215px;font-size:11px;line-height:12px;color:#333;transform:scaleX(0.9011);">Girls</span>
<div style="left:908px;top:260px;width:5px;height:1px;background:#a8a8a8;"></div>
<span class="t" style="left:882.99px;top:254px;font-size:11px;line-height:12px;color:#333;">600</span>
<div style="left:908px;top:300px;width:5px;height:1px;background:#a8a8a8;"></div>
<span class="t" style="left:882.99px;top:294px;font-size:11px;line-height:12px;color:#333;">550</span>
<div style="left:908px;top:340px;width:5px;height:1px;background:#a8a8a8;"></div>
<span class="t" style="left:882.99px;top:334px;font-size:11px;line-height:12px;color:#333;">500</span>
<div style="left:908px;top:380px;width:5px;height:1px;background:#a8a8a8;"></div>
<span class="t" style="left:882.99px;top:374px;font-size:11px;line-height:12px;color:#333;">450</span>
<div style="left:908px;top:421px;width:5px;height:1px;background:#a8a8a8;"></div>
<span class="t" style="left:882.99px;top:415px;font-size:11px;line-height:12px;color:#333;">400</span>
<div style="left:908px;top:461px;width:5px;height:1px;background:#a8a8a8;"></div>
<span class="t" style="left:882.99px;top:455px;font-size:11px;line-height:12px;color:#333;">350</span>
<div style="left:908px;top:501px;width:5px;height:1px;background:#a8a8a8;"></div>
<span class="t" style="left:882.99px;top:495px;font-size:11px;line-height:12px;color:#333;">300</span>
<div style="left:908px;top:541px;width:5px;height:1px;background:#a8a8a8;"></div>
<span class="t" style="left:882.99px;top:535px;font-size:11px;line-height:12px;color:#333;">250</span>
<div style="left:908px;top:581px;width:5px;height:1px;background:#a8a8a8;"></div>
<span class="t" style="left:882.99px;top:575px;font-size:11px;line-height:12px;color:#333;">200</span>
<div style="left:908px;top:622px;width:5px;height:1px;background:#a8a8a8;"></div>
<span class="t" style="left:882.99px;top:616px;font-size:11px;line-height:12px;color:#333;">150</span>
<div style="left:908px;top:662px;width:5px;height:1px;background:#a8a8a8;"></div>
<span class="t" style="left:882.99px;top:656px;font-size:11px;line-height:12px;color:#333;">100</span>
<div style="left:908px;top:702px;width:5px;height:1px;background:#a8a8a8;"></div>
<span class="t" style="left:889.11px;top:696px;font-size:11px;line-height:12px;color:#333;">50</span>
<div style="left:908px;top:742px;width:5px;height:1px;background:#a8a8a8;"></div>
<span class="t" style="left:895.24px;top:736px;font-size:11px;line-height:12px;color:#333;">0</span>
<div style="left:911px;top:273px;width:2px;height:1px;background:#a8a8a8;"></div>
<div style="left:911px;top:287px;width:2px;height:1px;background:#a8a8a8;"></div>
<div style="left:911px;top:313px;width:2px;height:1px;background:#a8a8a8;"></div>
<div style="left:911px;top:327px;width:2px;height:1px;background:#a8a8a8;"></div>
<div style="left:911px;top:353px;width:2px;height:1px;background:#a8a8a8;"></div>
<div style="left:911px;top:367px;width:2px;height:1px;background:#a8a8a8;"></div>
<div style="left:911px;top:394px;width:2px;height:1px;background:#a8a8a8;"></div>
<div style="left:911px;top:407px;width:2px;height:1px;background:#a8a8a8;"></div>
<div style="left:911px;top:434px;width:2px;height:1px;background:#a8a8a8;"></div>
<div style="left:911px;top:448px;width:2px;height:1px;background:#a8a8a8;"></div>
<div style="left:911px;top:474px;width:2px;height:1px;background:#a8a8a8;"></div>
<div style="left:911px;top:488px;width:2px;height:1px;background:#a8a8a8;"></div>
<div style="left:911px;top:514px;width:2px;height:1px;background:#a8a8a8;"></div>
<div style="left:911px;top:528px;width:2px;height:1px;background:#a8a8a8;"></div>
<div style="left:911px;top:554px;width:2px;height:1px;background:#a8a8a8;"></div>
<div style="left:911px;top:568px;width:2px;height:1px;background:#a8a8a8;"></div>
<div style="left:911px;top:595px;width:2px;height:1px;background:#a8a8a8;"></div>
<div style="left:911px;top:608px;width:2px;height:1px;background:#a8a8a8;"></div>
<div style="left:911px;top:635px;width:2px;height:1px;background:#a8a8a8;"></div>
<div style="left:911px;top:649px;width:2px;height:1px;background:#a8a8a8;"></div>
<div style="left:911px;top:675px;width:2px;height:1px;background:#a8a8a8;"></div>
<div style="left:911px;top:689px;width:2px;height:1px;background:#a8a8a8;"></div>
<div style="left:911px;top:715px;width:2px;height:1px;background:#a8a8a8;"></div>
<div style="left:911px;top:729px;width:2px;height:1px;background:#a8a8a8;"></div>
<div style="left:911px;top:247px;width:2px;height:1px;background:#a8a8a8;"></div>
<div style="left:995px;top:743px;width:1px;height:5px;background:#a8a8a8;"></div>
<div style="left:972px;top:743px;width:1px;height:2px;background:#a8a8a8;"></div>
<div style="left:949px;top:743px;width:1px;height:2px;background:#a8a8a8;"></div>
<div style="left:926px;top:743px;width:1px;height:2px;background:#a8a8a8;"></div>
<div style="left:1027px;top:743px;width:1px;height:2px;background:#a8a8a8;"></div>
<div style="left:1060px;top:743px;width:1px;height:2px;background:#a8a8a8;"></div>
<div style="left:1092px;top:743px;width:1px;height:2px;background:#a8a8a8;"></div>
<div style="left:1125px;top:743px;width:1px;height:2px;background:#a8a8a8;"></div>
<span class="t" style="left:966.90px;top:752px;font-size:11px;line-height:12px;color:#333;transform:scaleX(0.9380);">A Level APS</span>
<div style="left:1158px;top:743px;width:1px;height:5px;background:#a8a8a8;"></div>
<div style="left:1190px;top:743px;width:1px;height:2px;background:#a8a8a8;"></div>
<div style="left:1223px;top:743px;width:1px;height:2px;background:#a8a8a8;"></div>
<div style="left:1255px;top:743px;width:1px;height:2px;background:#a8a8a8;"></div>
<div style="left:1288px;top:743px;width:1px;height:2px;background:#a8a8a8;"></div>
<span class="t" style="left:1122.70px;top:752px;font-size:11px;line-height:12px;color:#333;transform:scaleX(0.9217);">Academic APS</span>
<div style="left:1321px;top:743px;width:1px;height:5px;background:#a8a8a8;"></div>
<span class="t" style="left:1284.90px;top:752px;font-size:11px;line-height:12px;color:#333;transform:scaleX(0.9417);">Vocational APS</span>
<div class="a" style="left:944px;top:294px;width:33px;height:448px;background:linear-gradient(#7bc455,#60ae42);border:1px solid #68a84c;border-bottom:none;box-sizing:border-box"></div>
<div class="a" style="left:978px;top:301px;width:34px;height:441px;background:linear-gradient(#5aa7d4,#3886b2);border:1px solid #4a8db6;border-bottom:none;box-sizing:border-box"></div>
<div class="a" style="left:1013px;top:287px;width:33px;height:455px;background:linear-gradient(#d5577f,#ad3363);border:1px solid #b84a70;border-bottom:none;box-sizing:border-box"></div>
<div class="a" style="left:1107px;top:294px;width:33px;height:448px;background:linear-gradient(#7bc455,#60ae42);border:1px solid #68a84c;border-bottom:none;box-sizing:border-box"></div>
<div class="a" style="left:1141px;top:301px;width:34px;height:441px;background:linear-gradient(#5aa7d4,#3886b2);border:1px solid #4a8db6;border-bottom:none;box-sizing:border-box"></div>
<div class="a" style="left:1176px;top:287px;width:33px;height:455px;background:linear-gradient(#d5577f,#ad3363);border:1px solid #b84a70;border-bottom:none;box-sizing:border-box"></div>
<div class="a" style="left:1270px;top:692px;width:33px;height:50px;background:linear-gradient(#7bc455,#60ae42);border:1px solid #68a84c;border-bottom:none;box-sizing:border-box"></div>
<div class="a" style="left:1304px;top:693px;width:34px;height:49px;background:linear-gradient(#5aa7d4,#3886b2);border:1px solid #4a8db6;border-bottom:none;box-sizing:border-box"></div>
<div class="a" style="left:1339px;top:692px;width:33px;height:50px;background:linear-gradient(#d5577f,#ad3363);border:1px solid #b84a70;border-bottom:none;box-sizing:border-box"></div>
<div class="a" style="left:23px;top:693px;width:820px;height:204px;background:#fff;border:1px solid #bdbdbd;box-sizing:border-box"></div>
<div style="left:24px;top:694px;width:818px;height:39px;background:#f5f5f5;"></div>
<div style="left:24px;top:734px;width:18px;height:126px;background:#f5f5f5;"></div>
<div style="left:155px;top:734px;width:687px;height:20px;background:#cde4f6;"></div>
<div style="left:43px;top:755px;width:799px;height:20px;background:#fbfbfb;"></div>
<div style="left:43px;top:797px;width:799px;height:20px;background:#fbfbfb;"></div>
<div style="left:43px;top:839px;width:799px;height:20px;background:#fbfbfb;"></div>
<div style="left:24px;top:713px;width:818px;height:1px;background:#d2d2d2;"></div>
<div style="left:24px;top:733px;width:818px;height:1px;background:#d2d2d2;"></div>
<div style="left:42px;top:754px;width:800px;height:1px;background:#d2d2d2;"></div>
<div style="left:42px;top:775px;width:800px;height:1px;background:#d2d2d2;"></div>
<div style="left:42px;top:796px;width:800px;height:1px;background:#d2d2d2;"></div>
<div style="left:42px;top:817px;width:800px;height:1px;background:#d2d2d2;"></div>
<div style="left:42px;top:838px;width:800px;height:1px;background:#d2d2d2;"></div>
<div style="left:42px;top:859px;width:800px;height:1px;background:#d2d2d2;"></div>
<div style="left:42px;top:694px;width:1px;height:165px;background:#d2d2d2;"></div>
<div style="left:154px;top:694px;width:1px;height:165px;background:#d2d2d2;"></div>
<div style="left:265px;top:714px;width:1px;height:145px;background:#d2d2d2;"></div>
<div style="left:381px;top:694px;width:1px;height:165px;background:#d2d2d2;"></div>
<div style="left:492px;top:714px;width:1px;height:145px;background:#d2d2d2;"></div>
<div style="left:608px;top:694px;width:1px;height:165px;background:#d2d2d2;"></div>
<div style="left:725px;top:714px;width:1px;height:145px;background:#d2d2d2;"></div>
<div class="a" style="left:43px;top:734px;width:111px;height:20px;background:#fff;border:1px dotted #555;box-sizing:border-box"></div>
<svg class="a" style="left:32px;top:741px" width="4" height="8" viewBox="0 0 4 8"><path d="M0 0 L4 4 L0 8Z" fill="#505050"/></svg>
<span class="t" style="left:158.92px;top:697px;font-size:11px;line-height:12px;color:#424242;font-weight:bold;transform:scaleX(1.1308);">All (100)</span>
<span class="t" style="left:385.47px;top:697px;font-size:11px;line-height:12px;color:#424242;font-weight:bold;transform:scaleX(1.1002);">Boys (51)</span>
<span class="t" style="left:612.99px;top:697px;font-size:11px;line-height:12px;color:#424242;font-weight:bold;transform:scaleX(1.1037);">Girls (49)</span>
<span class="t" style="left:159.60px;top:717px;font-size:11px;line-height:12px;color:#424242;transform:scaleX(1.0762);">#</span>
<span class="t" style="left:386.60px;top:717px;font-size:11px;line-height:12px;color:#424242;transform:scaleX(1.0762);">#</span>
<span class="t" style="left:613.60px;top:717px;font-size:11px;line-height:12px;color:#424242;transform:scaleX(1.0762);">#</span>
<span class="t" style="left:270.60px;top:717px;font-size:11px;line-height:12px;color:#424242;transform:scaleX(1.0556);">%</span>
<span class="t" style="left:497.60px;top:717px;font-size:11px;line-height:12px;color:#424242;transform:scaleX(1.0556);">%</span>
<span class="t" style="left:730.60px;top:717px;font-size:11px;line-height:12px;color:#424242;transform:scaleX(1.0556);">%</span>
<span class="t" style="left:46.92px;top:738px;font-size:11px;line-height:12px;color:#424242;transform:scaleX(1.0049);">3 A*-E (A Level)</span>
<span class="t" style="left:158.80px;top:738px;font-size:11px;line-height:12px;color:#424242;">55</span>
<span class="t" style="left:269.80px;top:738px;font-size:11px;line-height:12px;color:#424242;">55</span>
<span class="t" style="left:385.80px;top:738px;font-size:11px;line-height:12px;color:#424242;">28</span>
<span class="t" style="left:496.80px;top:738px;font-size:11px;line-height:12px;color:#424242;">54.9</span>
<span class="t" style="left:612.80px;top:738px;font-size:11px;line-height:12px;color:#424242;">27</span>
<span class="t" style="left:729.80px;top:738px;font-size:11px;line-height:12px;color:#424242;">55.1</span>
<span class="t" style="left:46.93px;top:759px;font-size:11px;line-height:12px;color:#424242;transform:scaleX(0.9766);">3 A*-E (Academic)</span>
<span class="t" style="left:158.80px;top:759px;font-size:11px;line-height:12px;color:#424242;">55</span>
<span class="t" style="left:269.80px;top:759px;font-size:11px;line-height:12px;color:#424242;">55</span>
<span class="t" style="left:385.80px;top:759px;font-size:11px;line-height:12px;color:#424242;">28</span>
<span class="t" style="left:496.80px;top:759px;font-size:11px;line-height:12px;color:#424242;">54.9</span>
<span class="t" style="left:612.80px;top:759px;font-size:11px;line-height:12px;color:#424242;">27</span>
<span class="t" style="left:729.80px;top:759px;font-size:11px;line-height:12px;color:#424242;">55.1</span>
<span class="t" style="left:46.80px;top:780px;font-size:11px;line-height:12px;color:#424242;transform:scaleX(1.0065);">2 A*-E (A Level)</span>
<span class="t" style="left:158.80px;top:780px;font-size:11px;line-height:12px;color:#424242;">76</span>
<span class="t" style="left:269.80px;top:780px;font-size:11px;line-height:12px;color:#424242;">76</span>
<span class="t" style="left:385.93px;top:780px;font-size:11px;line-height:12px;color:#424242;">36</span>
<span class="t" style="left:496.80px;top:780px;font-size:11px;line-height:12px;color:#424242;">70.59</span>
<span class="t" style="left:613.05px;top:780px;font-size:11px;line-height:12px;color:#424242;">40</span>
<span class="t" style="left:729.80px;top:780px;font-size:11px;line-height:12px;color:#424242;">81.63</span>
<span class="t" style="left:46.81px;top:801px;font-size:11px;line-height:12px;color:#424242;transform:scaleX(0.9780);">2 A*-E (Academic)</span>
<span class="t" style="left:158.80px;top:801px;font-size:11px;line-height:12px;color:#424242;">76</span>
<span class="t" style="left:269.80px;top:801px;font-size:11px;line-height:12px;color:#424242;">76</span>
<span class="t" style="left:385.93px;top:801px;font-size:11px;line-height:12px;color:#424242;">36</span>
<span class="t" style="left:496.80px;top:801px;font-size:11px;line-height:12px;color:#424242;">70.59</span>
<span class="t" style="left:613.05px;top:801px;font-size:11px;line-height:12px;color:#424242;">40</span>
<span class="t" style="left:729.80px;top:801px;font-size:11px;line-height:12px;color:#424242;">81.63</span>
<span class="t" style="left:46.92px;top:822px;font-size:11px;line-height:12px;color:#424242;transform:scaleX(1.0048);">3 Substantial Vocat...</span>
<span class="t" style="left:158.80px;top:822px;font-size:11px;line-height:12px;color:#424242;">8</span>
<span class="t" style="left:269.80px;top:822px;font-size:11px;line-height:12px;color:#424242;">8</span>
<span class="t" style="left:386.05px;top:822px;font-size:11px;line-height:12px;color:#424242;">4</span>
<span class="t" style="left:496.80px;top:822px;font-size:11px;line-height:12px;color:#424242;">7.84</span>
<span class="t" style="left:613.05px;top:822px;font-size:11px;line-height:12px;color:#424242;">4</span>
<span class="t" style="left:729.80px;top:822px;font-size:11px;line-height:12px;color:#424242;">8.16</span>
<span class="t" style="left:46.80px;top:843px;font-size:11px;line-height:12px;color:#424242;transform:scaleX(1.0060);">2 Substantial Vocat...</span>
<span class="t" style="left:158.80px;top:843px;font-size:11px;line-height:12px;color:#424242;">8</span>
<span class="t" style="left:269.80px;top:843px;font-size:11px;line-height:12px;color:#424242;">8</span>
<span class="t" style="left:386.05px;top:843px;font-size:11px;line-height:12px;color:#424242;">4</span>
<span class="t" style="left:496.80px;top:843px;font-size:11px;line-height:12px;color:#424242;">7.84</span>
<span class="t" style="left:613.05px;top:843px;font-size:11px;line-height:12px;color:#424242;">4</span>
<span class="t" style="left:729.80px;top:843px;font-size:11px;line-height:12px;color:#424242;">8.16</span>
<span class="t" style="left:714.87px;top:901px;font-size:11px;line-height:12px;color:#222;transform:scaleX(1.0715);">* # = Total, % = Percent</span>
<div class="a" style="left:876px;top:783px;width:538px;height:114px;background:#fff;border:1px solid #bdbdbd;box-sizing:border-box"></div>
<div style="left:877px;top:784px;width:536px;height:39px;background:#f5f5f5;"></div>
<div style="left:877px;top:824px;width:18px;height:63px;background:#f5f5f5;"></div>
<div style="left:969px;top:824px;width:444px;height:20px;background:#e6f0fa;"></div>
<div style="left:896px;top:845px;width:517px;height:20px;background:#fbfbfb;"></div>
<div style="left:877px;top:803px;width:536px;height:1px;background:#d2d2d2;"></div>
<div style="left:877px;top:823px;width:536px;height:1px;background:#d2d2d2;"></div>
<div style="left:895px;top:844px;width:518px;height:1px;background:#d2d2d2;"></div>
<div style="left:895px;top:865px;width:518px;height:1px;background:#d2d2d2;"></div>
<div style="left:895px;top:886px;width:518px;height:1px;background:#d2d2d2;"></div>
<div style="left:895px;top:784px;width:1px;height:102px;background:#d2d2d2;"></div>
<div style="left:968px;top:784px;width:1px;height:102px;background:#d2d2d2;"></div>
<div style="left:1039px;top:804px;width:1px;height:82px;background:#d2d2d2;"></div>
<div style="left:1114px;top:784px;width:1px;height:102px;background:#d2d2d2;"></div>
<div style="left:1185px;top:804px;width:1px;height:82px;background:#d2d2d2;"></div>
<div style="left:1260px;top:784px;width:1px;height:102px;background:#d2d2d2;"></div>
<div style="left:1336px;top:804px;width:1px;height:82px;background:#d2d2d2;"></div>
<svg class="a" style="left:885px;top:831px" width="4" height="8" viewBox="0 0 4 8"><path d="M0 0 L4 4 L0 8Z" fill="#505050"/></svg>
<span class="t" style="left:972.93px;top:787px;font-size:11px;line-height:12px;color:#424242;font-weight:bold;transform:scaleX(1.0918);">All</span>
<span class="t" style="left:1118.51px;top:787px;font-size:11px;line-height:12px;color:#424242;font-weight:bold;transform:scaleX(1.0481);">Boys</span>
<span class="t" style="left:1264.92px;top:787px;font-size:11px;line-height:12px;color:#424242;font-weight:bold;transform:scaleX(1.0129);">Girls</span>
<span class="t" style="left:971.77px;top:807px;font-size:11px;line-height:12px;color:#424242;transform:scaleX(0.9439);">Pupil</span>
<span class="t" style="left:1117.77px;top:807px;font-size:11px;line-height:12px;color:#424242;transform:scaleX(0.9439);">Pupil</span>
<span class="t" style="left:1263.77px;top:807px;font-size:11px;line-height:12px;color:#424242;transform:scaleX(0.9439);">Pupil</span>
<span class="t" style="left:1042.68px;top:807px;font-size:11px;line-height:12px;color:#424242;transform:scaleX(1.0500);">Entry</span>
<span class="t" style="left:1188.68px;top:807px;font-size:11px;line-height:12px;color:#424242;transform:scaleX(1.0500);">Entry</span>
<span class="t" style="left:1339.68px;top:807px;font-size:11px;line-height:12px;color:#424242;transform:scaleX(1.0500);">Entry</span>
<span class="t" style="left:899.90px;top:828px;font-size:11px;line-height:12px;color:#424242;transform:scaleX(0.9380);">A Level APS</span>
<span class="t" style="left:1002.26px;top:828px;font-size:11px;line-height:12px;color:#424242;">556.95</span>
<span class="t" style="left:1077.26px;top:828px;font-size:11px;line-height:12px;color:#424242;">227.79</span>
<span class="t" style="left:1148.26px;top:828px;font-size:11px;line-height:12px;color:#424242;">548.53</span>
<span class="t" style="left:1223.26px;top:828px;font-size:11px;line-height:12px;color:#424242;">232.16</span>
<span class="t" style="left:1299.26px;top:828px;font-size:11px;line-height:12px;color:#424242;">565.71</span>
<span class="t" style="left:1375.76px;top:828px;font-size:11px;line-height:12px;color:#424242;">223.55</span>
<span class="t" style="left:899.90px;top:849px;font-size:11px;line-height:12px;color:#424242;transform:scaleX(0.9810);">Academic ...</span>
<span class="t" style="left:1002.26px;top:849px;font-size:11px;line-height:12px;color:#424242;">556.95</span>
<span class="t" style="left:1077.26px;top:849px;font-size:11px;line-height:12px;color:#424242;">223.23</span>
<span class="t" style="left:1148.26px;top:849px;font-size:11px;line-height:12px;color:#424242;">548.53</span>
<span class="t" style="left:1229.39px;top:849px;font-size:11px;line-height:12px;color:#424242;">224.7</span>
<span class="t" style="left:1299.26px;top:849px;font-size:11px;line-height:12px;color:#424242;">565.71</span>
<span class="t" style="left:1375.76px;top:849px;font-size:11px;line-height:12px;color:#424242;">221.76</span>
<span class="t" style="left:899.90px;top:870px;font-size:11px;line-height:12px;color:#424242;transform:scaleX(1.0095);">Vocational ...</span>
<span class="t" style="left:1008.39px;top:870px;font-size:11px;line-height:12px;color:#424242;">61.67</span>
<span class="t" style="left:1077.26px;top:870px;font-size:11px;line-height:12px;color:#424242;">209.05</span>
<span class="t" style="left:1154.39px;top:870px;font-size:11px;line-height:12px;color:#424242;">60.82</span>
<span class="t" style="left:1229.39px;top:870px;font-size:11px;line-height:12px;color:#424242;">206.8</span>
<span class="t" style="left:1305.39px;top:870px;font-size:11px;line-height:12px;color:#424242;">62.55</span>
<span class="t" style="left:1376.52px;top:870px;font-size:11px;line-height:12px;color:#424242;">211.38</span>
<span class="t" style="left:1171.38px;top:901px;font-size:11px;line-height:12px;color:#222;transform:scaleX(0.9784);">* Pupil = Points Per Pupil, Entry =Points Per Entry</span>
<div style="left:1471px;top:152px;width:4px;height:60px;background:#c3c6cc;"></div>
<svg class="a" style="left:1451px;top:156px" width="13" height="14" viewBox="0 0 13 14"><ellipse cx="2.2" cy="6.2" rx="1.9" ry="2.9" fill="#4a7ebb"/><ellipse cx="6.2" cy="2.6" rx="2.3" ry="2.6" fill="#4a7ebb"/><ellipse cx="10.7" cy="2.8" rx="2.5" ry="2.5" fill="#4a7ebb"/><ellipse cx="6.6" cy="7.3" rx="2.5" ry="2.6" fill="#4a7ebb"/><ellipse cx="6.3" cy="11.6" rx="2.1" ry="2.3" fill="#4a7ebb"/><ellipse cx="10.7" cy="10.9" rx="2.4" ry="2.4" fill="#4a7ebb"/></svg>
<span class="t" style="left:1463px;top:173px;font-size:11px;line-height:13px;color:#333;letter-spacing:-0.512px;transform-origin:0 0;transform:rotate(90deg)">Groups</span>
<span class="t" style="left:9.23px;top:938px;font-size:11px;line-height:12px;color:#fff;font-weight:bold;transform:scaleX(1.0674);">Selected Series:</span>
<span class="t" style="left:110.35px;top:938px;font-size:11px;line-height:12px;color:#fff;transform:scaleX(0.9924);">Year 13 (2014/2015) Actual Results</span>
<svg class="a" style="left:295px;top:937px" width="14" height="14" viewBox="0 0 14 14">
<rect x=".5" y="2.5" width="13" height="11" fill="#fff"/><rect x=".5" y="2.5" width="13" height="3.5" fill="#9fb3d4"/>
<rect x="2" y="0" width="1.4" height="4" fill="#d8dde6"/><rect x="5" y="0" width="1.4" height="4" fill="#d8dde6"/><rect x="8" y="0" width="1.4" height="4" fill="#d8dde6"/><rect x="11" y="0" width="1.4" height="4" fill="#d8dde6"/>
<path d="M5 7.5 L9 7.5 L7 12.5" fill="none" stroke="#3a4a6a" stroke-width="1.3"/></svg>
<span class="t" style="left:313.91px;top:938px;font-size:11px;line-height:12px;color:#fff;transform:scaleX(0.9889);">Change</span>
<span class="t" style="left:1262.31px;top:938px;font-size:11px;line-height:12px;color:#fff;transform:scaleX(0.9874);">Open Windows:</span>
<svg class="a" style="left:1352px;top:938.8px" width="14.4" height="9.4" viewBox="0 0 15 11" preserveAspectRatio="none"><path d="M0 5.5 L5.2 .3 L7.6 .3 L7.6 1.2 L4.9 4 L14.2 4 L14.2 7 L4.9 7 L7.6 9.8 L7.6 10.7 L5.2 10.7 Z" fill="#5cc067"/></svg>
<svg class="a" style="left:1431.6px;top:938.8px" width="14.4" height="9.4" viewBox="0 0 15 11" preserveAspectRatio="none"><path d="M15 5.5 L9.8 .3 L7.4 .3 L7.4 1.2 L10.1 4 L.8 4 L.8 7 L10.1 7 L7.4 9.8 L7.4 10.7 L9.8 10.7 Z" fill="#5cc067"/></svg>
<svg class="a" style="left:1392px;top:937px" width="14" height="14" viewBox="0 0 14 14">
<rect x="2.3" y="0.2" width="11.5" height="9.3" fill="#ffffff"/><rect x="2.3" y="0.2" width="11.5" height="2.2" fill="#8f8f8f"/>
<rect x="0" y="4" width="12" height="10" fill="#4a5568"/><rect x="0.2" y="4.3" width="11.3" height="9.2" fill="#ffffff"/><rect x="0.2" y="4.3" width="11.3" height="2.2" fill="#8f8f8f"/></svg>
<svg class="a" style="left:1413px;top:943px" width="5" height="3" viewBox="0 0 5 3"><path d="M0 0 L5 0 L2.5 3Z" fill="#6d8fc4"/></svg>
<div style="left:1467px;top:951px;width:2px;height:2px;background:#b8c4dc;"></div>
<div style="left:1470px;top:951px;width:2px;height:2px;background:#b8c4dc;"></div>
<div style="left:1473px;top:951px;width:2px;height:2px;background:#b8c4dc;"></div>
<div style="left:1470px;top:948px;width:2px;height:2px;background:#b8c4dc;"></div>
<div style="left:1473px;top:948px;width:2px;height:2px;background:#b8c4dc;"></div>
<div style="left:1473px;top:945px;width:2px;height:2px;background:#b8c4dc;"></div>
</body></html>
